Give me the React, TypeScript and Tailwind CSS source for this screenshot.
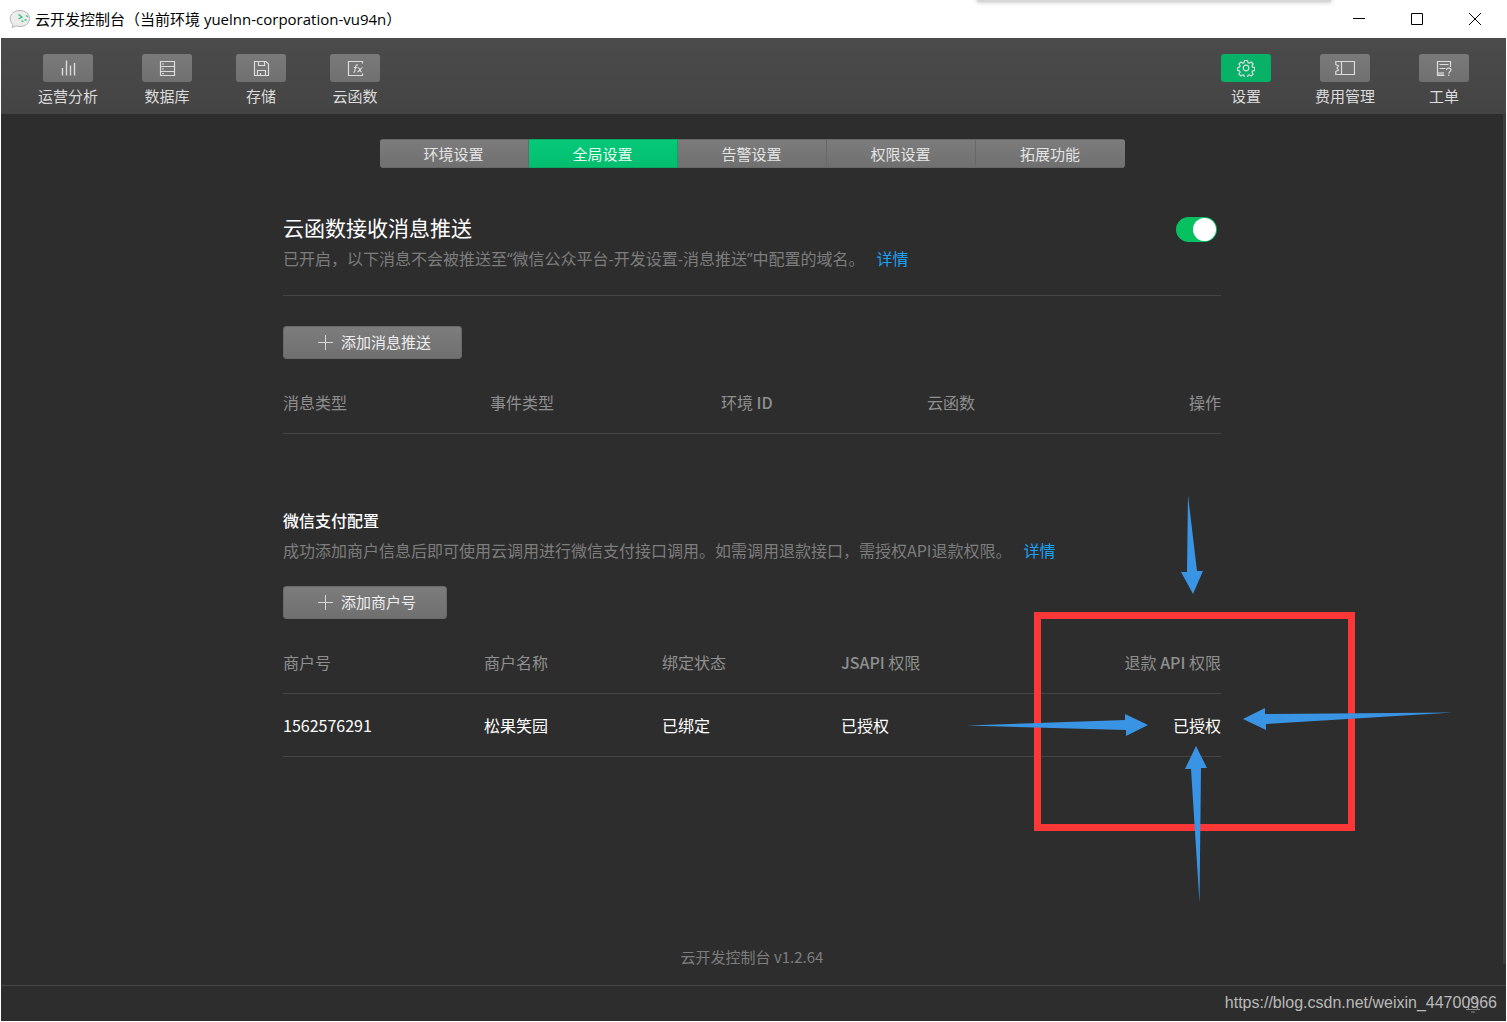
import { useState } from 'react';

type NavItem = { label: string; icon: React.ReactNode; active?: boolean };

const iconProps = {
  width: 18,
  height: 18,
  viewBox: '0 0 18 18',
  fill: 'none',
  stroke: 'currentColor',
  strokeWidth: 1.2,
  'aria-hidden': true,
} as const;

const leftNav: NavItem[] = [
  {
    label: '运营分析',
    icon: (
      <svg {...iconProps} strokeWidth={1.4}>
        <path d="M3.5 9v7.500M7.5 1.500v15M11.5 6.500v10M15.500 4v12.500" />
      </svg>
    ),
  },
  {
    label: '数据库',
    icon: (
      <svg {...iconProps}>
        <path d="M2.5 2.5h14v14h-14zM2.5 7.5h14M2.5 12.5h14M4 5h2M4 10h2M4 14.5h2" />
      </svg>
    ),
  },
  {
    label: '存储',
    icon: (
      <svg {...iconProps}>
        <path d="M2.5 2.5h11.5l2.5 2.5v11.5h-14zM6.5 2.5v4h6v-4M5.5 16.5v-5h8v5M8.5 16v-2" />
      </svg>
    ),
  },
  {
    label: '云函数',
    icon: (
      <svg {...iconProps}>
        <path d="M16.5 4.500v-2h-14v14h14v-2" />
        <path d="M12 6c-1.600-.6-2.100.5-2.300 1.500l-.9 4.500c-.2 1-.6 1.400-1.400 1.200M7.800 8.500h3.400M11.800 8.500c2 0 2 4.500 4 4.500M16.500 8.500c-1.800.2-3 4.300-5.200 4.500" />
      </svg>
    ),
  },
];

const rightNav: NavItem[] = [
  {
    label: '设置',
    active: true,
    icon: (
      <svg {...iconProps} strokeLinejoin="round">
        <circle cx="9" cy="9" r="2.800" />
        <path d="M7.500 1.500h3l.5 2.100 1.300.6 1.900-1.200 2 2-1.200 1.900.5 1.200 2.200.6v2.700l-2.200.5-.5 1.300 1.200 1.900-2 1.900-1.900-1.200-1.300.6-.5 2.100h-3l-.5-2.100-1.200-.6-1.900 1.200-2-1.900 1.200-1.900-.5-1.300-2-.5v-2.700l2-.6.5-1.200-1.200-1.900 2-2 1.900 1.200 1.200-.6z" />
      </svg>
    ),
  },
  {
    label: '费用管理',
    icon: (
      <svg {...iconProps} width={20} viewBox="0 0 20 18">
        <path d="M.8 2.500h18.700v13H.8v-3l2.700-1.500-1.500-2 1.500-2L.8 5.500zM6.500 2.500v13" />
      </svg>
    ),
  },
  {
    label: '工单',
    icon: (
      <svg {...iconProps}>
        <path d="M15.500 8V2.500h-13v14h7M4.500 5.500h9M4.500 9.500h6" />
        <path d="M3 14.500h6" strokeWidth="3" opacity=".6" />
        <path d="M11.500 11c0-2.700 4.500-2.500 4.500 0 0 1.600-2.200 1.600-2.200 3.500M13.800 15.500v1.500" />
      </svg>
    ),
  },
];

const tabs = ['环境设置', '全局设置', '告警设置', '权限设置', '拓展功能'];

const NavButton = ({ item }: { item: NavItem }) => (
  <button type="button" className="flex flex-col items-center gap-[3px] text-[15px] leading-[22px] text-[#dcdcdc]">
    <span
      className={`flex h-7 w-[50px] items-center justify-center rounded-[3px] ${
        item.active ? 'bg-[#07b168]' : 'bg-linear-to-b from-[#7a7a7a] to-[#707070]'
      }`}
    >
      {item.icon}
    </span>
    {item.label}
  </button>
);

const AddButton = ({ label }: { label: string }) => (
  <button
    type="button"
    className="flex h-[33px] items-center gap-[7px] rounded-[3px] border border-[#696969] bg-linear-to-b from-[#7c7c7c] to-[#707070] pr-[30px] pl-8 text-[15px] text-[#eeeeee]"
  >
    <svg width="18" height="17" viewBox="0 0 18 17" stroke="#d6d6d6" aria-hidden="true">
      <path d="M9.500 1v15M2 8.500h15" />
    </svg>
    {label}
  </button>
);

/* Hand-drawn highlight around the refund permission cell */
const Annotation = () => (
  <>
    <div className="pointer-events-none absolute top-[104px] left-[751px] h-[219px] w-[321px] border-[7px] border-[#fc3737]" />
    <svg
      className="pointer-events-none absolute top-[-13px] left-[683px] max-w-none"
      width="488"
      height="409"
      viewBox="966 495 488 409"
      fill="#3a94e4"
      aria-hidden="true"
    >
      <path d="M1188 495l-1 77h-6l12 22 10-23h-6z" />
      <path d="M966 725.500l159-5.500v-6l23 11-22 11v-6z" />
      <path d="M1453 712.500l-188 1.500v-6l-22 11 23 11v-6z" />
      <path d="M1199.500 903l-8.500-134h-6l11-23 11 22h-6z" />
    </svg>
  </>
);

export default function App() {
  const [activeTab, setActiveTab] = useState('全局设置');
  const [pushEnabled, setPushEnabled] = useState(true);

  return (
    <div className="relative flex min-h-screen flex-col border-x border-b border-white bg-[#2d2d2d] font-['Noto_Sans_CJK_SC',sans-serif]">
      {/* Title bar */}
      <div className="relative flex h-[38px] items-center justify-between overflow-hidden bg-white pr-0.5 pl-2 text-black">
        <div className="absolute top-[-6px] right-[175px] h-2 w-[354px] bg-[#d6d6d6] shadow-[0_0_5px_#bbbbbb]" />
        <div className="flex items-center gap-1 text-[15px]">
          <svg width="22" height="22" viewBox="0 0 22 22" aria-hidden="true">
            <path
              d="M11 2.500c5.500 0 9.500 3.300 9.500 8s-4 8-9.500 8c-1.500 0-3-.3-4-.7l-4 1.700.7-3.200c-1.700-1.500-2.500-3.500-2.500-5.800 0-4.700 4.300-8 9.800-8z"
              fill="#ececec"
              stroke="#b5b5b5"
            />
            <path d="M9.500 6.500l3.500 2.500-3.500 2M17 7.500l2 1.200M12.500 13l2 .3M15.500 12h2" fill="none" stroke="#2fc47c" strokeWidth="1.300" />
          </svg>
          <h1 className="font-['Open_Sans','Noto_Sans_CJK_SC',sans-serif]">
            云开发控制台（当前环境 yuelnn-corporation-vu94n）
          </h1>
        </div>
        <div className="flex h-full">
          <button type="button" aria-label="最小化" className="flex w-[58px] items-center justify-center">
            <svg width="12" height="12" viewBox="0 0 12 12" stroke="#000">
              <path d="M0 5.500h12" />
            </svg>
          </button>
          <button type="button" aria-label="最大化" className="flex w-[58px] items-center justify-center">
            <svg width="12" height="12" viewBox="0 0 12 12" stroke="#000" fill="none">
              <path d="M.5.5h11v11H.5z" />
            </svg>
          </button>
          <button type="button" aria-label="关闭" className="flex w-[58px] items-center justify-center">
            <svg width="12" height="12" viewBox="0 0 12 12" stroke="#000">
              <path d="M0 0l12 12M12 0L0 12" />
            </svg>
          </button>
        </div>
      </div>

      <header className="flex h-[76px] items-start justify-between bg-linear-to-b from-[#4b4b4b] to-[#444444] px-[37px] pt-4">
        <nav className="flex gap-11">
          {leftNav.map((item) => (
            <NavButton key={item.label} item={item} />
          ))}
        </nav>
        <nav className="flex gap-11">
          {rightNav.map((item) => (
            <NavButton key={item.label} item={item} />
          ))}
        </nav>
      </header>

      <div className="flex flex-1">
        <main className="flex flex-1 flex-col items-center pt-[25px] pb-4">
          <div className="grid h-[29px] w-[745px] grid-cols-5 overflow-hidden rounded-[3px]">
            {tabs.map((tab) => (
              <button
                key={tab}
                type="button"
                onClick={() => setActiveTab(tab)}
                className={`border-y border-r text-[15px] leading-[27px] last:border-r-0 ${
                  tab === activeTab
                    ? 'border-[#08a863] bg-linear-to-b from-[#05c878] to-[#05be70] text-[#e6f9f0]'
                    : 'border-[#686868] bg-linear-to-b from-[#7c7c7c] to-[#707070] text-[#e4e4e4]'
                }`}
              >
                {tab}
              </button>
            ))}
          </div>

          <div className="w-[938px]">
            <section className="mt-11">
              <div className="flex items-start justify-between border-b border-[#444444] pb-6">
                <div>
                  <h2 className="text-[21px] leading-[30px] text-white">云函数接收消息推送</h2>
                  <p className="mt-[5px] flex gap-3 font-['Open_Sans','Noto_Sans_CJK_SC',sans-serif] text-[16px] leading-6 text-[#7d7d7d]">
                    已开启，以下消息不会被推送至“微信公众平台-开发设置-消息推送”中配置的域名。
                    <a href="#push" className="text-[#1aa0f5]">详情</a>
                  </p>
                </div>
                <label className="mt-[5px] mr-1 flex cursor-pointer">
                  <input
                    type="checkbox"
                    role="switch"
                    aria-label="云函数接收消息推送"
                    checked={pushEnabled}
                    onChange={(e) => setPushEnabled(e.target.checked)}
                    className="peer sr-only"
                  />
                  <span className="flex h-[25px] w-[41px] items-center rounded-full bg-[#666666] p-px peer-checked:justify-end peer-checked:bg-[#07c160]">
                    <span className="h-[23px] w-[23px] rounded-full bg-white" />
                  </span>
                </label>
              </div>

              <div className="mt-[30px]">
                <AddButton label="添加消息推送" />
              </div>
              <table className="mt-[14px] w-full table-fixed text-left text-[16px] text-[#8f8f8f]">
                <thead>
                  <tr className="h-[60px] border-b border-[#444444]">
                    <th className="w-[207px] pb-0.5 font-normal">消息类型</th>
                    <th className="w-[231px] pb-0.5 font-normal">事件类型</th>
                    <th className="w-[206px] pb-0.5 font-normal">
                      环境 <span className="font-medium">ID</span>
                    </th>
                    <th className="pb-0.5 font-normal">云函数</th>
                    <th className="pb-0.5 text-right font-normal">操作</th>
                  </tr>
                </thead>
              </table>
            </section>

            <section className="relative mt-[74px]">
              <h2 className="text-[16px] leading-6 font-medium text-white">微信支付配置</h2>
              <p className="mt-[6px] flex gap-3 text-[16px] leading-6 text-[#7d7d7d]">
                成功添加商户信息后即可使用云调用进行微信支付接口调用。如需调用退款接口，需授权API退款权限。
                <a href="#pay" className="text-[#1aa0f5]">详情</a>
              </p>
              <div className="mt-6">
                <AddButton label="添加商户号" />
              </div>
              <table className="mt-[15px] w-full table-fixed text-left text-[16px]">
                <thead className="text-[#8f8f8f]">
                  <tr className="h-[60px] border-b border-[#444444]">
                    <th className="w-[201px] pb-0.5 font-normal">商户号</th>
                    <th className="w-[178px] pb-0.5 font-normal">商户名称</th>
                    <th className="w-[179px] pb-0.5 font-normal">绑定状态</th>
                    <th className="pb-0.5 font-normal">
                      <span className="font-medium">JSAPI</span> 权限
                    </th>
                    <th className="pb-0.5 text-right font-normal">
                      退款 <span className="font-medium">API</span> 权限
                    </th>
                  </tr>
                </thead>
                <tbody className="text-white">
                  <tr className="h-[63px] border-b border-[#444444]">
                    <td>1562576291</td>
                    <td>松果笑园</td>
                    <td>已绑定</td>
                    <td>已授权</td>
                    <td className="text-right">已授权</td>
                  </tr>
                </tbody>
              </table>
              <Annotation />
            </section>
          </div>

          <p className="mt-auto text-[15px] leading-6 text-[#7d7d7d]">云开发控制台 v1.2.64</p>
        </main>
        <div className="mb-[21px] w-[3px] bg-[#3c3c3c]" />
      </div>

      <footer className="flex h-9 items-center justify-end border-t border-[#444444] pr-6">
        <button type="button" aria-label="通知" className="text-[#8a8a8a]">
          <svg {...iconProps}>
            <path d="M2 14.500h14M4.500 14V8c0-6 9-6 9 0v6M9 1v2M7 17h4" />
          </svg>
        </button>
      </footer>
      <span className="pointer-events-none absolute right-[9px] bottom-[6px] font-['Liberation_Sans',sans-serif] text-[16px] leading-6 text-[#b9b9b9]">
        https://blog.csdn.net/weixin_44700966
      </span>
    </div>
  );
}
